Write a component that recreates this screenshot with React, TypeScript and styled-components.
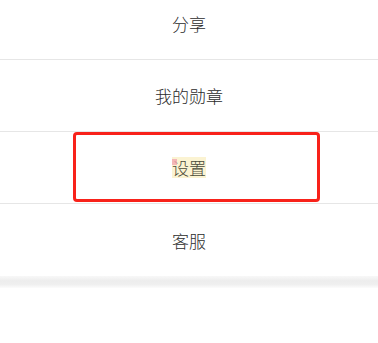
import React from 'react';
import styled, { createGlobalStyle } from 'styled-components';

const GlobalStyle = createGlobalStyle`
  html, body {
    margin: 0;
    padding: 0;
    background: #ffffff;
    font-family: "Noto Sans CJK SC", "Noto Sans", sans-serif;
  }
`;

const Page = styled.div`
  width: 378px;
  height: 343px;
  overflow: hidden;
  background: #fff;
`;

const Menu = styled.ul`
  list-style: none;
  margin: -12px 0 0;
  padding: 0;
`;

const MenuItem = styled.li<{ $last?: boolean }>`
  position: relative;
  height: 72px;
  box-sizing: border-box;
  display: flex;
  align-items: center;
  justify-content: center;
  border-bottom: ${({ $last }) => ($last ? 'none' : '1px solid #e6e6e6')};
  font-size: 17px;
  font-weight: 300;
  color: #2b2b2b;
`;

const Label = styled.span<{ $marked?: boolean }>`
  position: relative;
  line-height: 21px;
  background: ${({ $marked }) => ($marked ? '#fbf3d2' : 'transparent')};
  color: ${({ $marked }) => ($marked ? '#4a4a3a' : '#2b2b2b')};
`;

const Mark = styled.i`
  position: absolute;
  left: 0;
  top: 2px;
  width: 5px;
  height: 6px;
  background: #f2a7b0;
  opacity: 0.8;
`;

const Highlight = styled.div`
  position: absolute;
  left: 73px;
  top: 0;
  width: 247px;
  height: 70px;
  box-sizing: border-box;
  border: 3px solid #f8221a;
  border-radius: 4px;
  pointer-events: none;
`;

const ShadowBand = styled.div`
  height: 12px;
  background: linear-gradient(to bottom, #f8f8f8 0%, #ededed 40%, #efefef 70%, #fcfcfc 100%);
`;

const items = ['分享', '我的勋章', '设置', '客服'];

export default function App() {
  return (
    <Page>
      <GlobalStyle />
      <Menu>
        {items.map((label, i) => (
          <MenuItem key={label} $last={i === items.length - 1}>
            {label === '设置' ? (
              <>
                <Label $marked>
                  <Mark />
                  {label}
                </Label>
                <Highlight />
              </>
            ) : (
              <Label>{label}</Label>
            )}
          </MenuItem>
        ))}
      </Menu>
      <ShadowBand />
    </Page>
  );
}
